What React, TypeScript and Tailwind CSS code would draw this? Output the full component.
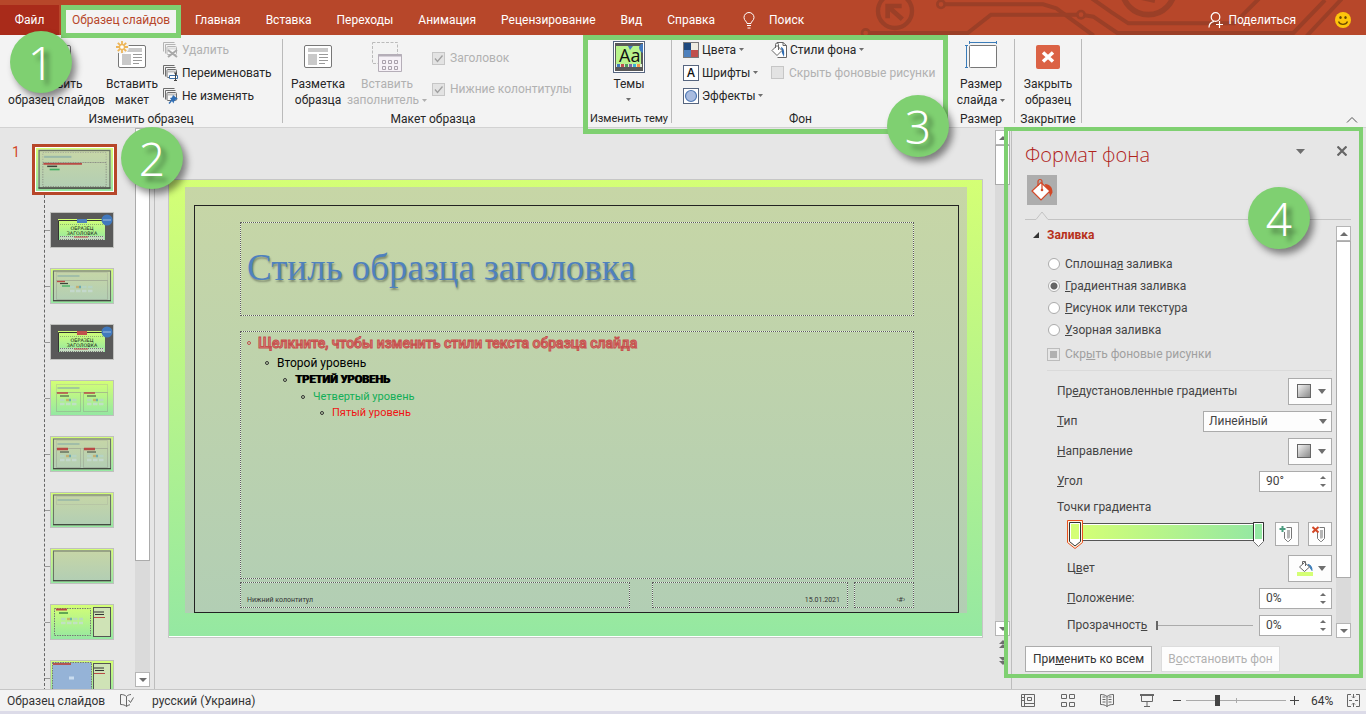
import type { ReactNode } from "react";

const tabs = ["Главная", "Вставка", "Переходы", "Анимация", "Рецензирование", "Вид", "Справка"];

type ThumbKind = "title" | "content" | "section" | "columns" | "compare" | "heading" | "blank" | "caption" | "picture";

const thumbs: { kind: ThumbKind; label: string }[] = [
  { kind: "title", label: "Титульный слайд" },
  { kind: "content", label: "Заголовок и объект" },
  { kind: "section", label: "Заголовок раздела" },
  { kind: "columns", label: "Два объекта" },
  { kind: "compare", label: "Сравнение" },
  { kind: "heading", label: "Только заголовок" },
  { kind: "blank", label: "Пустой слайд" },
  { kind: "caption", label: "Объект с подписью" },
  { kind: "picture", label: "Рисунок с подписью" },
];

function Caret({ className = "", size = "h-[4px] w-[6px]" }: { className?: string; size?: string }) {
  return (
    <svg viewBox="0 0 6 4" preserveAspectRatio="none" className={`shrink-0 fill-[#6e6e6e] ${size} ${className}`}>
      <path d="M0 0h6L3 4z" />
    </svg>
  );
}

function Badge({ n, className }: { n: number; className: string }) {
  return (
    <div
      className={`absolute z-30 flex h-[62px] w-[62px] items-center justify-center rounded-full bg-[#7fd071] font-['Noto_Sans',sans-serif] text-[46px] font-light leading-none text-white shadow-[4px_5px_7px_rgba(0,0,0,0.45)] [text-shadow:5px_5px_5px_rgba(0,0,0,0.4)] ${className}`}
    >
      {n}
    </div>
  );
}

function HeaderPattern() {
  return (
    <svg viewBox="0 0 1518 105" className="absolute right-0 top-0 h-[35px] w-[506px]" fill="none" stroke="#9b3f27" strokeWidth="12">
      <circle cx="105" cy="33" r="51" strokeWidth="13" />
      <path d="M83 55V18h42M85 20l42 38" strokeWidth="14" />
      <circle cx="243" cy="13" r="11" strokeWidth="8" />
      <path d="M254 13h295l40 12 112 82" />
      <circle cx="17" cy="99" r="11" strokeWidth="8" />
      <path d="M28 99h295l70-55h259" />
      <circle cx="663" cy="44" r="11" strokeWidth="8" />
      <path d="M674 46l26 4 72 49h528L1395 0" />
      <path d="M695-5l60 42 50 33h318l75-75" />
      <circle cx="865" cy="-35" r="79" strokeWidth="17" />
      <path d="M840-8l45 10" strokeWidth="14" />
      <path d="M1340 108L1445-3" />
    </svg>
  );
}

function BulbIcon() {
  return (
    <svg viewBox="0 0 12 17" className="h-[17px] w-[12px]" fill="none" stroke="#fff">
      <path d="M4 11.5c0-2-3-3-3-6a5 5 0 0 1 10 0c0 3-3 4-3 6zM4 13.5h4M4.5 16h3" />
    </svg>
  );
}

function ShareIcon() {
  return (
    <svg viewBox="0 0 16 16" className="h-4 w-4" fill="none" stroke="#fff" strokeWidth="1.2">
      <circle cx="7.5" cy="5" r="4.3" />
      <path d="M1 15.5c0-3 2-5.500 5-6.200M8 12.500h7M11.500 9v7" />
    </svg>
  );
}

function SmileIcon() {
  return (
    <svg viewBox="0 0 16 16" className="h-4 w-4">
      <circle cx="8" cy="8" r="8" fill="#fdc50b" />
      <ellipse cx="5.500" cy="5.500" rx="1.200" ry="1.600" fill="#6b4a00" />
      <ellipse cx="10.500" cy="5.500" rx="1.200" ry="1.600" fill="#6b4a00" />
      <path d="M3.500 9.500c1.500 3.700 7.500 3.700 9 0" fill="none" stroke="#6b4a00" strokeWidth="1.300" />
    </svg>
  );
}

function LayoutIcon({ star = false }: { star?: boolean }) {
  return (
    <svg viewBox="0 0 32 32" className="h-8 w-8">
      <rect x="2.500" y="4.500" width="27" height="22" rx="1.500" fill="#fff" stroke="#777" />
      <path d="M6 7h20v4H6zM6 13h9v11H6z" fill="#c9c9c9" />
      <path d="M17 13.500h9M17 16.500h9M17 19.500h9M17 22.500h6" stroke="#999" />
      {star && (
        <>
          <circle cx="6" cy="6" r="7" fill="#f3f3f3" />
          <path d="M6 0v3M6 9v3M0 6h3M9 6h3M1.800 1.800l2.200 2.200M8 8l2.200 2.200M10.200 1.800L8 4M4 8l-2.200 2.200" stroke="#edb65a" strokeWidth="1.800" />
          <circle cx="6" cy="6" r="2.500" fill="#fff" stroke="#edb65a" strokeWidth="1.300" />
        </>
      )}
    </svg>
  );
}

function PlaceholderIcon() {
  return (
    <svg viewBox="0 0 32 32" className="h-8 w-8" fill="none">
      <path d="M1.500 1.500h25v21h-25z" stroke="#bbb" strokeDasharray="3 1.500" />
      <path d="M7.500 13.500h23v17h-23z" fill="#f6f1f7" stroke="#b5aeb8" />
      <path d="M7 14.500h24" stroke="#b5aeb8" strokeWidth="2" />
      <path d="M11.500 19.500h3v3h-3zM17.500 19.500h3v3h-3zM23.500 19.500h3v3h-3zM11.500 25.500h3v3h-3zM17.500 25.500h3v3h-3zM23.500 25.500h3v3h-3z" stroke="#aaa1ad" />
    </svg>
  );
}

function ThemesIcon() {
  return (
    <svg viewBox="0 0 32 32" className="h-8 w-8">
      <rect x=".5" y=".5" width="31" height="31" fill="#fff" stroke="#56657f" />
      <rect x="2" y="2" width="28" height="28" fill="#595959" />
      <rect x="3" y="5" width="25" height="18" fill="#b9f48c" />
      <path d="M28 3h2v9c-3-1-4-4-4-6z" fill="#4179bd" />
      <path d="M15 5h5l-3 4z" fill="#4179bd" />
      <text x="6" y="21" fontSize="18" fill="#111" fontFamily="Open Sans, sans-serif">
        Aa
      </text>
      <path d="M3 23h26v3H3z" fill="#dcebd0" />
      <path d="M4 23h3v3H4z" fill="#4179bd" />
      <path d="M8 23h3v3H8z" fill="#c0504d" />
      <path d="M12 23h3v3h-3z" fill="#4f9b5a" />
      <path d="M16 23h3v3h-3z" fill="#8064a2" />
      <path d="M20 23h3v3h-3z" fill="#3bb3d0" />
      <path d="M24 23h3v3h-3z" fill="#f79646" />
    </svg>
  );
}

function SlideSizeIcon() {
  return (
    <svg viewBox="0 0 32 32" className="h-8 w-8" fill="none">
      <rect x="4.500" y="4.500" width="27" height="22" rx="1" fill="#fff" stroke="#777" />
      <path d="M4 1.500h28M4.500 0v3M31.500 0v3M1.500 4v23M0 4.500h3M0 26.500h3" stroke="#3b7cb8" />
    </svg>
  );
}

function CloseMasterIcon() {
  return (
    <svg viewBox="0 0 32 32" className="h-8 w-8">
      <rect x="4" y="4" width="24" height="24" rx="2" fill="#db6245" />
      <path d="M11 11.500l10 9M21 11.500l-10 9" stroke="#fff" strokeWidth="3.500" />
    </svg>
  );
}

function StackIcon({ kind }: { kind: "delete" | "rename" | "keep" }) {
  const stroke = kind === "delete" ? "#b4b4b4" : "#6d6d6d";
  return (
    <svg viewBox="0 0 16 16" className="h-4 w-4 shrink-0" fill="none" stroke={stroke}>
      <path d="M.5 9.500v-9h11M2.500 11.500v-9h10" />
      <rect x="4" y="4.500" width="9.500" height="8" rx="1" fill="#f8f8f8" />
      <path d="M5 6.500h8" strokeWidth="2" opacity=".4" />
      {kind === "delete" && <path d="M5 8l9 7M14 8l-9 7" stroke="#a9a9a9" strokeWidth="2" />}
      {kind === "rename" && (
        <>
          <path d="M6.500 10.500h8v3h-8z" fill="#fff" stroke="#3b6ea5" />
          <path d="M12.500 8v7.500M11 8h3M11 15.500h3" stroke="#444" />
        </>
      )}
      {kind === "keep" && (
        <>
          <path d="M10 7l5 4-2 .5-2 2-.5 2L7 10l2-.5z" fill="#2f6db3" stroke="none" />
          <path d="M9 12l-3 3.500" stroke="#2f6db3" strokeWidth="1.300" />
        </>
      )}
    </svg>
  );
}

function ColorsIcon() {
  return (
    <svg viewBox="0 0 16 16" className="h-4 w-4 shrink-0">
      <rect x=".5" y=".5" width="15" height="15" fill="#fff" stroke="#7a7a7a" />
      <path d="M1 1h7v7H1z" fill="#1f497d" />
      <path d="M8 1h7v7H8z" fill="#eeece1" />
      <path d="M1 8h7v7H1z" fill="#4f81bd" />
      <path d="M8 8h7v7H8z" fill="#c0504d" />
    </svg>
  );
}

function FontsIcon() {
  return (
    <svg viewBox="0 0 16 16" className="h-4 w-4 shrink-0 overflow-visible">
      <rect x=".5" y=".5" width="15" height="15" fill="#fff" stroke="#56657f" />
      <text x="8" y="12" textAnchor="middle" fontSize="12" fontWeight="600" fill="#111" fontFamily="Open Sans, sans-serif">
        A
      </text>
    </svg>
  );
}

function EffectsIcon() {
  return (
    <svg viewBox="0 0 16 16" className="h-4 w-4 shrink-0">
      <rect x=".5" y=".5" width="15" height="15" fill="#fff" stroke="#56657f" />
      <circle cx="8" cy="8" r="5.500" fill="#a9bce0" stroke="#5079b4" strokeWidth="1.200" />
    </svg>
  );
}

function StylesIcon() {
  return (
    <svg viewBox="0 0 16 16" className="h-4 w-4 shrink-0" fill="none" stroke="#666">
      <path d="M6 .5h6l3.500 3v12h-9" fill="#fff" />
      <path d="M12 .5v3h3.500" />
      <path d="M10 5c3 1 3.500 4 3 10l-2-4z" fill="#2f6db3" stroke="none" />
      <path d="M6 3.500L11 8.500l-5 5-5-5z" fill="#fff" />
      <path d="M4.500 6V2.500a1.500 1.500 0 0 1 3 0V8" />
    </svg>
  );
}

function PaintBucket() {
  return (
    <svg viewBox="0 0 24 24" className="h-6 w-6" fill="none" stroke="#d24726" strokeWidth="1.200">
      <path d="M15 6c5 .5 7.500 3 7.500 8.500L20 19c0-4-1.500-6-4-7z" fill="#d24726" stroke="none" />
      <path d="M11 4.500L20 13l-9 9-9-9z" fill="#fff" />
      <path d="M8 8V3.500a2 2 0 0 1 4 0V12" />
      <circle cx="12" cy="12" r="1.300" fill="#d24726" stroke="none" />
    </svg>
  );
}

function ColorFillIcon() {
  return (
    <svg viewBox="0 0 16 16" className="h-4 w-4" fill="none" stroke="#666">
      <path d="M11 4.500c3 .5 4 2.500 4 6l-2-3z" fill="#3b7cb8" stroke="#3b7cb8" />
      <path d="M7.500 2.500L12.500 7l-5 4.500-5-4.500z" fill="#fff" />
      <path d="M5.500 4V1.500h3V6" />
      <path d="M0 12h16v4H0z" fill="#d4ff75" stroke="none" />
    </svg>
  );
}

function StopIcon({ remove = false }: { remove?: boolean }) {
  return (
    <svg viewBox="0 0 16 16" className="h-4 w-4" fill="none">
      <path d="M5.500 6v6.500l3 3h1l3-3V1.500h-5" stroke="#777" />
      <path d="M8 4h3v7.500l-1 1H8z" fill="#b5b5b5" />
      {remove ? <path d="M.5 1l6 5.500M6.500 1l-6 5.500" stroke="#d24726" strokeWidth="2" /> : <path d="M3.500 0v6M.5 3h6" stroke="#4b9b7f" strokeWidth="2" />}
    </svg>
  );
}

function BigButton({ icon, lines, caret, disabled, className }: { icon: ReactNode; lines: string[]; caret?: boolean; disabled?: boolean; className: string }) {
  return (
    <button type="button" disabled={disabled} className={`flex h-full flex-col items-center pt-[6px] ${disabled ? "text-[#b1b1b1]" : ""} ${className}`}>
      {icon}
      <span className="mt-[3px] flex flex-col items-center whitespace-nowrap leading-4">
        {lines.map((line, i) => (
          <span key={line} className="flex items-center gap-[3px]">
            {line}
            {caret && lines.length > 1 && i === lines.length - 1 && <Caret size="h-[3px] w-[5px]" className={disabled ? "opacity-50" : ""} />}
          </span>
        ))}
        {caret && lines.length === 1 && <Caret size="h-[3px] w-[5px]" className="mt-[6px]" />}
      </span>
    </button>
  );
}

function SmallButton({ icon, label, caret, disabled }: { icon: ReactNode; label: string; caret?: boolean; disabled?: boolean }) {
  return (
    <button type="button" disabled={disabled} className={`flex h-[23px] items-center gap-[3px] whitespace-nowrap ${disabled ? "text-[#b1b1b1]" : ""}`}>
      {icon}
      <span>{label}</span>
      {caret && <Caret size="h-[3px] w-[5px]" />}
    </button>
  );
}

function RibbonCheck({ label, checked }: { label: string; checked?: boolean }) {
  return (
    <label className="flex items-center gap-[5px] whitespace-nowrap text-[#b1b1b1]">
      <input type="checkbox" disabled defaultChecked={checked} className="h-[13px] w-[13px] shrink-0 appearance-none border border-[#c6c6c6] bg-[#e3e3e3]" />
      {checked && (
        <svg viewBox="0 0 13 13" className="-ml-[18px] h-[13px] w-[13px]" fill="none" stroke="#a0a0a0" strokeWidth="1.300">
          <path d="M3 6.500l2.500 3L10.500 3.500" />
        </svg>
      )}
      {label}
    </label>
  );
}

function Group({ label, className, labelClass = "", children }: { label: string; className: string; labelClass?: string; children: ReactNode }) {
  return (
    <section className={`flex shrink-0 flex-col ${className}`}>
      <div className="flex h-[76px]">{children}</div>
      <h2 className={`whitespace-nowrap text-center leading-4 ${labelClass}`}>{label}</h2>
    </section>
  );
}

function Separator() {
  return <div className="mb-1 mt-1 w-px shrink-0 bg-[#bababa]" />;
}

function Ribbon() {
  return (
    <div className="flex h-[93px] shrink-0 border-b border-[#d2d2d2] bg-[#f3f3f3] text-[#262626]">
      <Group label="Изменить образец" className="w-[282px]">
        <BigButton icon={<LayoutIcon star />} lines={["Вставить", "образец слайдов"]} className="w-[113px]" />
        <BigButton icon={<LayoutIcon star />} lines={["Вставить", "макет"]} className="w-[38px]" />
        <div className="ml-3 flex flex-col pt-[3px]">
          <SmallButton icon={<StackIcon kind="delete" />} label="Удалить" disabled />
          <SmallButton icon={<StackIcon kind="rename" />} label="Переименовать" />
          <SmallButton icon={<StackIcon kind="keep" />} label="Не изменять" />
        </div>
      </Group>
      <Separator />
      <Group label="Макет образца" className="w-[300px]">
        <BigButton icon={<LayoutIcon />} lines={["Разметка", "образца"]} className="w-[70px]" />
        <BigButton icon={<PlaceholderIcon />} lines={["Вставить", "заполнитель"]} caret disabled className="w-[68px]" />
        <div className="ml-[11px] flex flex-col gap-[15px] pt-[15px] leading-4">
          <RibbonCheck label="Заголовок" checked />
          <RibbonCheck label="Нижние колонтитулы" checked />
        </div>
      </Group>
      <div className="relative flex w-[365px] shrink-0">
        <Group label="Изменить тему" className="w-[88px] pl-[4px]" labelClass="text-[11px]">
          <BigButton icon={<ThemesIcon />} lines={["Темы"]} caret className="w-full" />
        </Group>
        <Separator />
        <Group label="Фон" className="w-[275px]" labelClass="pr-[18px]">
          <div className="ml-[11px] flex w-[88px] flex-col pt-[3px]">
            <SmallButton icon={<ColorsIcon />} label="Цвета" caret />
            <SmallButton icon={<FontsIcon />} label="Шрифты" caret />
            <SmallButton icon={<EffectsIcon />} label="Эффекты" caret />
          </div>
          <div className="flex flex-col pt-[3px]">
            <SmallButton icon={<StylesIcon />} label="Стили фона" caret />
            <div className="flex h-[23px] items-center">
              <RibbonCheck label="Скрыть фоновые рисунки" />
            </div>
          </div>
        </Group>
        <div className="pointer-events-none absolute inset-x-0 -bottom-[7px] top-0 z-20 border-[5px] border-[#7fd071]" />
        <Badge n={3} className="-bottom-[30px] -right-[1px]" />
      </div>
      <Group label="Размер" className="w-[66px]">
        <BigButton icon={<SlideSizeIcon />} lines={["Размер", "слайда"]} caret className="w-full" />
      </Group>
      <Separator />
      <Group label="Закрытие" className="w-[66px]">
        <BigButton icon={<CloseMasterIcon />} lines={["Закрыть", "образец"]} className="w-full" />
      </Group>
      <Separator />
      <button type="button" aria-label="Свернуть ленту" className="ml-auto mr-2 self-end pb-1">
        <svg viewBox="0 0 12 6" className="h-[6px] w-[12px]" fill="none" stroke="#555">
          <path d="M1 5.500l5-5 5 5" />
        </svg>
      </button>
    </div>
  );
}

function ScrollBar({ className, thumbClass }: { className: string; thumbClass: string }) {
  const box = "flex h-[15px] shrink-0 items-center justify-center border border-[#b5b5b5] bg-white";
  return (
    <div className={`flex w-[15px] shrink-0 flex-col bg-[#dadada] ${className}`}>
      <button type="button" aria-label="Вверх" className={box}>
        <Caret size="h-[4px] w-[8px]" className="rotate-180" />
      </button>
      <div className={`border border-[#ababab] bg-white ${thumbClass}`} />
      <button type="button" aria-label="Вниз" className={`mt-auto ${box}`}>
        <Caret size="h-[4px] w-[8px]" />
      </button>
    </div>
  );
}

function MiniObjects({ x, y, w = 24 }: { x: number; y: number; w?: number }) {
  return (
    <g strokeWidth="2.400" strokeDasharray="4.500 1.500" opacity=".7">
      <path d={`M${x} ${y}h${w}`} stroke="#b5d5cc" />
      <path d={`M${x} ${y + 4}h${w}`} stroke="#c9dcd8" />
      <path d={`M${x + 6} ${y}h3`} stroke="#c9a35c" />
      <path d={`M${x + 9} ${y}h2`} stroke="#4f9bb0" />
    </g>
  );
}

function ThumbArt({ kind }: { kind: ThumbKind | "master" }) {
  const dark = kind === "title" || kind === "section";
  const framed = kind === "master" || kind === "content" || kind === "compare" || kind === "heading" || kind === "blank";
  const split = kind === "caption" || kind === "picture";
  const accent = kind === "title" ? "#4f81bd" : "#c0504d";
  return (
    <svg viewBox="0 0 62 34" preserveAspectRatio="none" className="block h-full w-full" fill="none">
      <defs>
        <linearGradient id={`bg-${kind}`} x1="0" y1="0" x2="0" y2="1">
          <stop stopColor="#d4ff75" />
          <stop offset="1" stopColor="#95e8a2" />
        </linearGradient>
        <linearGradient id={`panel-${kind}`} x1="0" y1="0" x2="0" y2="1">
          <stop stopColor="#c7d6a6" />
          <stop offset="1" stopColor="#b2ceb4" />
        </linearGradient>
      </defs>
      <rect width="62" height="34" fill={dark ? "#595959" : `url(#bg-${kind})`} />
      {dark && (
        <>
          <rect x="7" y="6" width="47" height="21" fill={`url(#bg-${kind})`} />
          <path d="M7.500 27V7.500H54" stroke="#333" />
          <path d="M9 11.500h44" stroke="#8fae70" strokeDasharray="1 1" />
          <path d="M9 25h44" stroke="#c5dcc0" strokeWidth="4" />
          <path d="M9 23.500h44M9 26.500h44" stroke="#777" strokeDasharray="1 1" />
          <path d="M23 24h14" stroke="#c0504d" />
          <rect x="26" y="6" width="10" height="4" fill={accent} />
          <circle cx="56" cy="7" r="5.500" fill="#4179bd" />
          <path d="M52 7h8" stroke="#b9d0ea" strokeWidth=".8" />
          <text x="31" y="16.500" textAnchor="middle" fontSize="4.800" fill="#111" fontFamily="DejaVu Sans, sans-serif">
            ОБРАЗЕЦ
          </text>
          <text x="31" y="21.500" textAnchor="middle" fontSize="4.800" fill="#111" fontFamily="DejaVu Sans, sans-serif">
            ЗАГОЛОВКА
          </text>
        </>
      )}
      {framed && (
        <>
          <rect x="1.500" y="1" width="59" height="31" fill={`url(#panel-${kind})`} />
          <rect x="2.500" y="2" width="57" height="30" stroke="#6b7365" />
          <path d="M2 31.500h58" stroke="#444a42" />
        </>
      )}
      {(framed || kind === "columns") && kind !== "blank" && (
        <>
          <rect x="5.500" y="3.500" width="51" height="8" stroke="#a9b09c" strokeWidth=".8" strokeDasharray="1 1" />
          <path d="M6.500 7h22" stroke="#8fb0a8" strokeWidth="1.600" opacity=".8" />
        </>
      )}
      {(kind === "master" || kind === "content") && (
        <>
          <rect x="5.500" y="11.500" width="51" height="19" stroke="#8d9286" strokeWidth=".8" strokeDasharray="1 1" />
          <path d={kind === "master" ? "M6 12.500h31" : "M6 12.500h8"} stroke="#b84a45" strokeWidth="1.300" />
          <path d="M9 14.500h8" stroke="#3c443a" strokeWidth="1.200" />
          <path d="M11 17h8" stroke="#3fae62" strokeWidth="1.300" />
        </>
      )}
      {kind === "content" && <MiniObjects x={19} y={18} />}
      {(kind === "columns" || kind === "compare") && (
        <>
          <rect x="5.500" y="11.500" width="24" height="19" stroke="#8d9286" strokeWidth=".8" strokeDasharray="1 1" />
          <rect x="32.500" y="11.500" width="24" height="19" stroke="#8d9286" strokeWidth=".8" strokeDasharray="1 1" />
          <path d="M6 12h11M33 12h11" stroke="#b84a45" strokeWidth={kind === "compare" ? 2.5 : 1.3} />
          <path d="M9 15h9M36 15h9" stroke="#3c443a" strokeWidth="1.200" />
          <MiniObjects x={9} y={19} w={17} />
          <MiniObjects x={36} y={19} w={17} />
        </>
      )}
      {split && (
        <>
          <rect x="42.500" y="2.500" width="17" height="29" fill="#cfe3b6" stroke="#555" />
          <path d="M43 7h10M44 9.500h9" stroke="#333" strokeWidth="1.200" />
          <path d="M43 12.500h11" stroke="#b84a45" />
        </>
      )}
      {kind === "caption" && (
        <>
          <rect x="3.500" y="3.500" width="36" height="27" stroke="#777" strokeDasharray="1.500 1" />
          <path d="M5 4.500h11" stroke="#b84a45" strokeWidth="2" />
          <path d="M8 8h9" stroke="#2d7a3d" strokeWidth="1.300" />
          <MiniObjects x={10} y={14} w={22} />
        </>
      )}
      {kind === "picture" && (
        <>
          <rect x="1.500" y="1.500" width="39" height="33" fill="#95b3d7" stroke="#777" strokeDasharray="1.500 1" />
          <path d="M2 3h18" stroke="#b84a45" strokeWidth="1.800" />
          <path d="M18 17h5" stroke="#c9dcef" strokeWidth="3" />
        </>
      )}
    </svg>
  );
}

function ThumbnailPane() {
  return (
    <nav aria-label="Образцы" className="relative flex w-[155px] shrink-0 border-r border-[#bdbdbd]">
      <div className="flex-1 overflow-hidden pt-4">
        <div className="flex">
          <span className="w-8 pl-[12px] text-[14px] leading-4 text-[#d24726]">1</span>
          <button type="button" aria-label="Образец слайдов" className="h-[51px] w-[85px] border-[3px] border-[#b7472a] bg-white p-px">
            <ThumbArt kind="master" />
          </button>
        </div>
        <ul className="ml-[44px] flex flex-col gap-5 border-l border-dashed border-[#666] pt-[17px]">
          {thumbs.map((t) => (
            <li key={t.kind} className="flex items-center">
              <span className="w-[5px] border-t border-dashed border-[#999]" />
              <button type="button" aria-label={t.label} className="h-9 w-16 border border-[#bfc0bd]">
                <ThumbArt kind={t.kind} />
              </button>
            </li>
          ))}
        </ul>
      </div>
      <ScrollBar className="mb-[2px] mr-1" thumbClass="h-[418px]" />
      <Badge n={2} className="-top-[1px] left-[121px]" />
    </nav>
  );
}

const placeholder = "border border-white/70 outline-1 outline-dotted outline-[#5c5c5c] -outline-offset-1";

const levels = [
  { text: "Второй уровень", row: "ml-[18px] h-[19px]", style: "text-[12px] text-black" },
  { text: "ТРЕТИЙ УРОВЕНЬ", row: "ml-[36px] h-4", style: "text-[11px] font-bold text-black [text-shadow:1px_0_0_#000]" },
  { text: "Четвертый уровень", row: "ml-[54px] h-[17px]", style: "text-[11px] text-[#12ae57]" },
  { text: "Пятый уровень", row: "ml-[73px] h-4", style: "text-[11px] text-[#f01414]" },
];

function Bullet({ className = "border-[#333]" }: { className?: string }) {
  return <span className={`h-[4px] w-[4px] shrink-0 rounded-full border ${className}`} />;
}

function SlideCanvas() {
  return (
    <main className="flex min-w-0 flex-1 pb-[51px] pl-[13px] pr-3 pt-[51px]">
      <div className="flex min-w-0 flex-1 flex-col border border-[#c6c6c6] bg-[linear-gradient(#d4ff75,#95e8a2)] pb-6 pl-4 pr-[15px] pt-[7px] shadow-[inset_0_-1px_0_#fff]">
        <div className="flex flex-1 bg-[linear-gradient(#c7d6a6,#b2ceb4)] pl-[9px] pr-2 pt-[18px]">
          <div className="flex min-w-0 flex-1 flex-col border border-[#222] pb-1 pl-[45px] pr-[44px] pt-4">
            <h1
              className={`flex h-[94px] items-center whitespace-nowrap pb-[3px] pl-[6px] font-['Liberation_Serif',serif] text-[37px] leading-none text-[#4f81bd] [text-shadow:1px_2px_2px_rgba(0,0,0,0.35)] ${placeholder}`}
            >
              Стиль образца заголовка
            </h1>
            <div className={`mt-[15px] flex-1 whitespace-nowrap pl-[6px] pt-px ${placeholder}`}>
              <div className="flex h-5 items-center gap-[7px] text-[14px] font-medium text-[#dc8a80] [-webkit-text-stroke:1px_#c6514e]">
                <Bullet className="border-[#c0504d]" />
                Щелкните, чтобы изменить стили текста образца слайда
              </div>
              {levels.map((l) => (
                <div key={l.text} className={`flex items-center gap-2 ${l.row} ${l.style}`}>
                  <Bullet />
                  {l.text}
                </div>
              ))}
            </div>
            <div className="mt-[3px] flex h-[26px] text-[7px] leading-none text-[#333]">
              <div className={`flex min-w-0 flex-1 items-end pb-[3px] pl-[6px] ${placeholder}`}>Нижний колонтитул</div>
              <div className={`ml-[22px] flex w-[196px] items-end justify-end pb-[3px] pr-[7px] ${placeholder}`}>15.01.2021</div>
              <div className={`ml-[6px] flex w-[60px] items-end justify-end pb-[3px] pr-2 ${placeholder}`}>‹#›</div>
            </div>
          </div>
        </div>
      </div>
    </main>
  );
}

function CanvasScroll() {
  return (
    <div className="mr-[1px] flex w-[15px] shrink-0 flex-col pt-[2px]">
      <ScrollBar className="flex-1" thumbClass="h-10" />
      <div className="flex h-[53px] flex-col items-center gap-[9px] pt-1">
        <button type="button" aria-label="Предыдущий слайд" className="flex flex-col">
          <Caret size="h-[4px] w-[8px]" className="rotate-180" />
          <Caret size="h-[4px] w-[8px]" className="rotate-180" />
        </button>
        <button type="button" aria-label="Следующий слайд" className="flex flex-col">
          <Caret size="h-[4px] w-[8px]" />
          <Caret size="h-[4px] w-[8px]" />
        </button>
      </div>
    </div>
  );
}

function RadioRow({ children, checked }: { children: ReactNode; checked?: boolean }) {
  return (
    <label className="flex h-[22px] items-center gap-[5px]">
      <input
        type="radio"
        name="fill"
        defaultChecked={checked}
        className="h-3 w-3 appearance-none rounded-full border border-[#ababab] bg-white checked:bg-[radial-gradient(#666_0_3px,#fff_4px)]"
      />
      <span>{children}</span>
    </label>
  );
}

function SwatchButton({ label, children }: { label: string; children: ReactNode }) {
  return (
    <button type="button" aria-label={label} className="flex h-[27px] w-[44px] items-center justify-between border border-[#ababab] bg-[#fdfdfd] pl-2 pr-[5px]">
      {children}
      <Caret size="h-[5px] w-[8px]" />
    </button>
  );
}

function Swatch() {
  return <span className="h-[14px] w-[14px] border border-[#666] bg-[linear-gradient(135deg,#f2f2f2,#8c8c8c)]" />;
}

function Spinner({ id, value }: { id: string; value: string }) {
  return (
    <div className="flex h-[21px] w-[73px] shrink-0 border border-[#ababab] bg-white">
      <input id={id} type="text" defaultValue={value} className="w-0 flex-1 bg-transparent pl-[6px] outline-none" />
      <div className="flex w-4 flex-col items-center justify-between py-[4px]">
        <button type="button" aria-label="Больше" className="flex">
          <Caret size="h-[3px] w-[6px]" className="rotate-180" />
        </button>
        <button type="button" aria-label="Меньше" className="flex">
          <Caret size="h-[3px] w-[6px]" />
        </button>
      </div>
    </div>
  );
}

function GradientStops() {
  return (
    <svg viewBox="0 0 198 30" preserveAspectRatio="none" className="h-[30px] min-w-0 flex-1" fill="none">
      <defs>
        <linearGradient id="stops">
          <stop stopColor="#d4ff75" />
          <stop offset="1" stopColor="#95e8a2" />
        </linearGradient>
      </defs>
      <path d="M12 4.500h180v17H12z" fill="#fff" stroke="#555" />
      <path d="M12 6h176v14H12z" fill="url(#stops)" />
      <path d="M.5 1.500h15v22l-7.500 6-7.500-6z" fill="#fdf3df" stroke="#e8501e" />
      <path d="M2.500 3.500h11v19l-5.500 4.500-5.500-4.500z" fill="#fff" stroke="#333" />
      <path d="M4 5h8v15H4z" fill="#d4ff75" />
      <path d="M186.500 3.500h10v19l-5 5-5-5z" fill="#fff" stroke="#777" />
      <path d="M186.500 22V3.500h10V22" stroke="#333" />
      <path d="M188 5h7v15h-7z" fill="#95e8a2" />
    </svg>
  );
}

function FormatPane() {
  const row = "flex h-[30px] items-center justify-between whitespace-nowrap";
  return (
    <aside className="relative flex w-[355px] shrink-0 flex-col border-l border-[#bdbdbd] pb-[17px] pl-[13px] pr-[15px] text-[#444]">
      <header className="flex h-[47px] shrink-0 items-center pt-[7px]">
        <h2 className="flex-1 font-['Open_Sans',sans-serif] text-[20px] font-light leading-7 text-[#b0241c]">Формат фона</h2>
        <button type="button" aria-label="Параметры области" className="mb-2 mr-8">
          <Caret size="h-[5px] w-[9px]" />
        </button>
        <button type="button" aria-label="Закрыть" className="mb-2 mr-1">
          <svg viewBox="0 0 10 10" className="h-[10px] w-[10px]" stroke="#666" strokeWidth="2.200">
            <path d="M.5.5l9 9M9.500.5l-9 9" />
          </svg>
        </button>
      </header>
      <button type="button" aria-label="Заливка" className="ml-[2px] flex h-[30px] w-[30px] shrink-0 items-center justify-center bg-[#adadad]">
        <PaintBucket />
      </button>
      <div className="mt-[6px] flex h-[9px] shrink-0 items-end">
        <span className="w-[11px] border-b border-[#c3c3c3]" />
        <svg viewBox="0 0 12 9" className="h-[9px] w-[12px]" fill="none" stroke="#c3c3c3">
          <path d="M0 8.500L6 1l6 7.500" />
        </svg>
        <span className="flex-1 border-b border-[#c3c3c3]" />
      </div>
      <div className="flex min-h-0 flex-1">
        <form className="mr-1 flex-1 pl-2 pt-1">
          <h3 className="flex h-[22px] items-center gap-2 font-bold text-[#b7321c]">
            <svg viewBox="0 0 6 6" className="h-[6px] w-[6px] fill-[#333]">
              <path d="M6 0v6H0z" />
            </svg>
            Заливка
          </h3>
          <div className="ml-[14px] border-b border-[#dadada] pb-[5px] pt-[7px]">
            <div className="pl-px">
              <RadioRow>
                Сплошна<u>я</u> заливка
              </RadioRow>
              <RadioRow checked>
                <u>Г</u>радиентная заливка
              </RadioRow>
              <RadioRow>
                <u>Р</u>исунок или текстура
              </RadioRow>
              <RadioRow>
                <u>У</u>зорная заливка
              </RadioRow>
            </div>
            <label className="mt-[2px] flex h-[22px] items-center gap-[5px] text-[#a0a0a0]">
              <input type="checkbox" disabled className="h-[13px] w-[13px] appearance-none border border-[#bcbcbc] bg-[linear-gradient(#b0b0b0,#b0b0b0)] bg-[length:7px_7px] bg-center bg-no-repeat" />
              <span>
                Скр<u>ы</u>ть фоновые рисунки
              </span>
            </label>
          </div>
          <div className="pl-6 pt-[5px]">
            <div className={row}>
              <span>
                Пр<u>е</u>дустановленные градиенты
              </span>
              <SwatchButton label="Предустановленные градиенты">
                <Swatch />
              </SwatchButton>
            </div>
            <div className={row}>
              <label htmlFor="type">
                <u>Т</u>ип
              </label>
              <div className="relative w-[129px]">
                <select id="type" className="block h-[21px] w-full appearance-none rounded-none border border-[#ababab] bg-[#fdfdfd] pl-[5px] leading-none">
                  <option>Линейный</option>
                </select>
                <Caret size="h-[5px] w-[8px]" className="pointer-events-none absolute right-[5px] top-2" />
              </div>
            </div>
            <div className={row}>
              <span>
                <u>Н</u>аправление
              </span>
              <SwatchButton label="Направление">
                <Swatch />
              </SwatchButton>
            </div>
            <div className={row}>
              <label htmlFor="angle">
                <u>У</u>гол
              </label>
              <Spinner id="angle" value="90°" />
            </div>
            <div className="flex h-[22px] items-center">Точки градиента</div>
            <div className="flex h-[35px] items-start pl-[10px] pt-[1px]">
              <GradientStops />
              <button type="button" aria-label="Добавить точку градиента" className="ml-[10px] mt-[3px] flex h-6 w-6 items-center justify-center border border-[#ababab] bg-[#fdfdfd]">
                <StopIcon />
              </button>
              <button type="button" aria-label="Удалить точку градиента" className="ml-[9px] mt-[3px] flex h-6 w-6 items-center justify-center border border-[#ababab] bg-[#fdfdfd]">
                <StopIcon remove />
              </button>
            </div>
            <div className="pl-[10px]">
              <div className={row}>
                <span>
                  Ц<u>в</u>ет
                </span>
                <SwatchButton label="Цвет">
                  <ColorFillIcon />
                </SwatchButton>
              </div>
              <div className={row}>
                <label htmlFor="position">
                  <u>П</u>оложение:
                </label>
                <Spinner id="position" value="0%" />
              </div>
              <div className="flex h-6 items-center">
                <label htmlFor="opacity" className="w-[89px]">
                  Прозрачност<u>ь</u>
                </label>
                <input
                  type="range"
                  aria-label="Прозрачность"
                  defaultValue={0}
                  className="mr-[6px] h-3 w-0 flex-1 appearance-none bg-[linear-gradient(#ababab,#ababab)] bg-[length:100%_1px] bg-center bg-no-repeat [&::-webkit-slider-thumb]:h-[9px] [&::-webkit-slider-thumb]:w-[2px] [&::-webkit-slider-thumb]:appearance-none [&::-webkit-slider-thumb]:bg-[#666]"
                />
                <Spinner id="opacity" value="0%" />
              </div>
            </div>
          </div>
        </form>
        <ScrollBar className="mt-[6px]" thumbClass="h-[337px]" />
      </div>
      <footer className="mt-2 flex shrink-0 gap-[9px]">
        <button type="button" className="h-[26px] w-[127px] whitespace-nowrap border border-[#ababab] bg-[#fdfdfd] text-[#333]">
          При<u>м</u>енить ко всем
        </button>
        <button type="button" disabled className="h-[26px] w-[119px] whitespace-nowrap border border-[#dcdcdc] bg-[#fdfdfd] text-[#b1b1b1]">
          В<u>о</u>сстановить фон
        </button>
      </footer>
      <div className="pointer-events-none absolute -left-[8px] -top-px bottom-[11px] right-[3px] z-20 border-4 border-[#7fd071]" />
      <Badge n={4} className="right-[56px] top-[59px]" />
    </aside>
  );
}

function StatusBar() {
  return (
    <footer className="shrink-0 border-b-[3px] border-b-[#dcdbe8] border-t border-t-[#c6c6c6] bg-[#f3f3f3] text-[#333]">
      <div className="flex h-[21px] items-center whitespace-nowrap pl-[7px] pr-[6px]">
        <span className="w-[113px]">Образец слайдов</span>
        <svg viewBox="0 0 14 13" className="mr-[18px] h-[13px] w-[14px]" fill="none" stroke="#666">
          <path d="M6.500 2.500C5 1 3 .5.500.5v10c2.500 0 4.500.5 6 2 1-1 2-1.500 3.500-1.800M6.500 2.500v10M6.500 2.500C7.500 1.300 9 .7 11 .5M8.500 6l2 2.500 3-5" />
        </svg>
        <span>русский (Украина)</span>
        <div className="ml-auto flex items-center">
          <button type="button" aria-label="Обычный" className="mr-[26px]">
            <svg viewBox="0 0 14 13" className="h-[13px] w-[14px]" fill="none" stroke="#666">
              <path d="M.5.5h13v12H.5zM3.500.500v12M3.500 9.500h10M6.500 3.500h4v3h-4zM.5 3.500h3M.5 6.500h3" />
            </svg>
          </button>
          <button type="button" aria-label="Сортировщик слайдов" className="mr-[25px]">
            <svg viewBox="0 0 14 13" className="h-[13px] w-[14px]" fill="none" stroke="#666">
              <path d="M.5.5h5v4h-5zM8.500.5h5v4h-5zM.5 8.500h5v4h-5zM8.500 8.500h5v4h-5z" />
            </svg>
          </button>
          <button type="button" aria-label="Режим чтения" className="mr-[26px]">
            <svg viewBox="0 0 14 13" className="h-[13px] w-[14px]" fill="none" stroke="#666">
              <path d="M7 2.500C5 .8 3 .5.500.5v10c2.500 0 4.500.3 6.500 2 2-1.700 4-2 6.500-2V.5c-2.500 0-4.500.3-6.500 2zM7 2.500v10M2.500 3h3M2.500 5.500h3M2.500 8h3M8.500 3h3M8.500 5.500h3M8.500 8h3" />
            </svg>
          </button>
          <button type="button" aria-label="Показ слайдов" className="mr-[19px]">
            <svg viewBox="0 0 14 13" className="h-[13px] w-[14px]" fill="none" stroke="#666">
              <path d="M0 1h14" strokeWidth="2" />
              <path d="M1.500 2v5.500h11V2M7 8v4M4 12.500h6" />
            </svg>
          </button>
          <button type="button" aria-label="Уменьшить" className="mr-[5px]">
            <svg viewBox="0 0 8 9" className="h-[9px] w-[8px]" stroke="#444">
              <path d="M0 4.500h8" />
            </svg>
          </button>
          <input
            type="range"
            aria-label="Масштаб"
            defaultValue={31}
            className="mr-1 h-3 w-[100px] appearance-none bg-[linear-gradient(#aaa,#aaa),linear-gradient(#aaa,#aaa)] bg-[length:100%_1px,1px_5px] bg-center bg-no-repeat [&::-webkit-slider-thumb]:h-[11px] [&::-webkit-slider-thumb]:w-[5px] [&::-webkit-slider-thumb]:appearance-none [&::-webkit-slider-thumb]:bg-[#444]"
          />
          <button type="button" aria-label="Увеличить" className="mr-3">
            <svg viewBox="0 0 9 9" className="h-[9px] w-[9px]" stroke="#444">
              <path d="M0 4.500h9M4.500 0v9" />
            </svg>
          </button>
          <span className="w-9">64%</span>
          <button type="button" aria-label="Вписать слайд">
            <svg viewBox="0 0 13 13" className="h-[13px] w-[13px]" fill="none" stroke="#666">
              <path d="M4 .5H.5v12H4M9 .5h3.500v12H9M6.500 0v4M6.500 9v4M2 6.500h3M8 6.500h3M5 2.500l1.500 1.500L8 2.500M5 10.500L6.500 9 8 10.500" />
            </svg>
          </button>
        </div>
      </div>
    </footer>
  );
}

export default function App() {
  return (
    <div className="relative flex h-screen min-w-[1240px] flex-col overflow-hidden bg-[#e6e6e6] font-['Roboto','Noto_Sans',sans-serif] text-[12px] leading-4">
      <header className="relative flex h-[35px] shrink-0 items-stretch bg-[#b7472a] pt-[5px] text-white">
        <HeaderPattern />
        <button type="button" className="w-[59px] bg-[#a92b1a]">
          Файл
        </button>
        <button type="button" className="relative ml-[2px] w-[120px] bg-[#f3f3f3] text-[#b7472a]">
          Образец слайдов
          <span className="pointer-events-none absolute -bottom-[3px] left-0 right-0 top-0 z-20 border-[5px] border-[#7fd071]" />
        </button>
        <div className="ml-[14px] flex gap-[25px]">
          {tabs.map((tab) => (
            <button key={tab} type="button">
              {tab}
            </button>
          ))}
        </div>
        <button type="button" className="ml-[28px] flex items-center gap-[14px]">
          <BulbIcon />
          Поиск
        </button>
        <div className="relative ml-auto flex items-center pr-[15px]">
          <button type="button" className="mr-[39px] flex items-center gap-1">
            <ShareIcon />
            Поделиться
          </button>
          <button type="button" aria-label="Отзыв">
            <SmileIcon />
          </button>
        </div>
      </header>
      <Ribbon />
      <div className="flex min-h-0 flex-1">
        <ThumbnailPane />
        <SlideCanvas />
        <CanvasScroll />
        <FormatPane />
      </div>
      <StatusBar />
      <Badge n={1} className="left-[10px] top-[31px]" />
    </div>
  );
}
